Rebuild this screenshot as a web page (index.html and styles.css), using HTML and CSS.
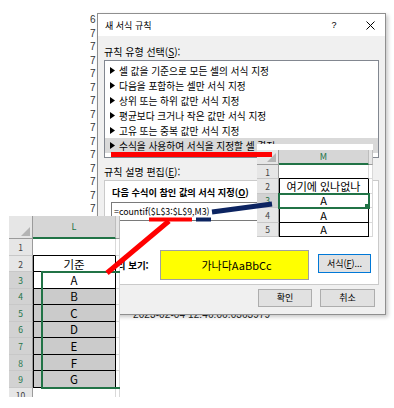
FILE: index.html
```html
<!DOCTYPE html>
<html lang="ko">
<head>
<meta charset="utf-8">
<title>새 서식 규칙</title>
<link rel="stylesheet" href="styles.css">
</head>
<body>
<div class="canvas">
  <div class="bg-log">
    <div>6</div><div>7</div><div>7</div><div>7</div><div>7</div><div>7</div><div>7</div><div>7</div><div>7</div><div>7</div><div>7</div><div>7</div><div>7</div><div>7</div><div>7</div>
  </div>
  <div class="bg-stamp">2023-02-04 12:46:06.0363979</div>

  <div class="dialog">
    <div class="titlebar">
      <span class="title">새 서식 규칙</span>
      <span class="tb-q">?</span>
      <span class="tb-x"><svg width="9" height="9" viewBox="0 0 9 9"><path d="M0.5 0.5L8.5 8.5M8.5 0.5L0.5 8.5" stroke="#000" stroke-width="1" fill="none"/></svg></span>
    </div>
    <div class="dlg-body">
      <div class="label">규칙 유형 선택(<u>S</u>):</div>
      <ul class="rule-list">
        <li><svg class="tri" width="5" height="7" viewBox="0 0 5 7"><path d="M0 0L5 3.5L0 7Z"/></svg>셀 값을 기준으로 모든 셀의 서식 지정</li>
        <li><svg class="tri" width="5" height="7" viewBox="0 0 5 7"><path d="M0 0L5 3.5L0 7Z"/></svg>다음을 포함하는 셀만 서식 지정</li>
        <li><svg class="tri" width="5" height="7" viewBox="0 0 5 7"><path d="M0 0L5 3.5L0 7Z"/></svg>상위 또는 하위 값만 서식 지정</li>
        <li><svg class="tri" width="5" height="7" viewBox="0 0 5 7"><path d="M0 0L5 3.5L0 7Z"/></svg>평균보다 크거나 작은 값만 서식 지정</li>
        <li><svg class="tri" width="5" height="7" viewBox="0 0 5 7"><path d="M0 0L5 3.5L0 7Z"/></svg>고유 또는 중복 값만 서식 지정</li>
        <li class="sel"><svg class="tri" width="5" height="7" viewBox="0 0 5 7"><path d="M0 0L5 3.5L0 7Z"/></svg>수식을 사용하여 서식을 지정할 셀 결정</li>
      </ul>
      <div class="label label2">규칙 설명 편집(<u>E</u>):</div>
      <div class="panel">
        <div class="panel-head">다음 수식이 참인 값의 서식 지정(<u>O</u>)</div>
        <div class="formula">=countif($L$3:$L$9,M3)</div>
        <div class="preview-row">
          <span class="preview-label">미리 보기:</span>
          <div class="preview-box">가나다AaBbCc</div>
          <button class="btn fmt">서식(<u>F</u>)...</button>
        </div>
      </div>
      <div class="footer">
        <button class="btn ok">확인</button>
        <button class="btn cancel">취소</button>
      </div>
    </div>
  </div>

  <div class="sheet sheet-m">
    <div class="c corner"><span class="corner-tri"></span></div>
    <div class="c ch act">M</div>
    <div class="c ch"></div>

    <div class="c rh">1</div>
    <div class="c top-bk"></div>
    <div class="c"></div>

    <div class="c rh">2</div>
    <div class="c bk">여기에 있나없나</div>
    <div class="c"></div>

    <div class="c rh act">3</div>
    <div class="c bk cur">A</div>
    <div class="c"></div>

    <div class="c rh">4</div>
    <div class="c bk">A</div>
    <div class="c"></div>

    <div class="c rh">5</div>
    <div class="c bk">A</div>
    <div class="c"></div>
  </div>

  <div class="sheet sheet-l">
    <div class="c corner"><span class="corner-tri"></span></div>
    <div class="c ch act">L</div>
    <div class="c ch"></div>

    <div class="c rh">1</div>
    <div class="c top-bk"></div>
    <div class="c"></div>

    <div class="c rh">2</div>
    <div class="c bk">기준</div>
    <div class="c"></div>

    <div class="c rh act">3</div>
    <div class="c bk">A</div>
    <div class="c"></div>

    <div class="c rh act">4</div>
    <div class="c bk fill">B</div>
    <div class="c"></div>

    <div class="c rh act">5</div>
    <div class="c bk fill">C</div>
    <div class="c"></div>

    <div class="c rh act">6</div>
    <div class="c bk fill">D</div>
    <div class="c"></div>

    <div class="c rh act">7</div>
    <div class="c bk fill">E</div>
    <div class="c"></div>

    <div class="c rh act">8</div>
    <div class="c bk fill">F</div>
    <div class="c"></div>

    <div class="c rh act">9</div>
    <div class="c bk fill">G</div>
    <div class="c"></div>

    <div class="c rh r10">10</div>
    <div class="c"></div>
    <div class="c"></div>

    <div class="sel-range"></div>
  </div>

  <svg class="annot" width="394" height="408" viewBox="0 0 394 408">
    <line x1="111" y1="154.5" x2="272" y2="154.5" stroke="#ff0000" stroke-width="5"/>
    <line x1="149" y1="219.5" x2="192" y2="219.5" stroke="#ff0000" stroke-width="4"/>
    <line x1="169" y1="221" x2="107" y2="273" stroke="#ff0000" stroke-width="5"/>
    <line x1="196" y1="219.5" x2="211" y2="219.5" stroke="#0c2461" stroke-width="4"/>
    <line x1="212" y1="212" x2="272" y2="204" stroke="#0c2461" stroke-width="5"/>
  </svg>
</div>
</body>
</html>
```

FILE: styles.css
```css
* { box-sizing: border-box; }

body {
  margin: 0;
  background: #fff;
}

.canvas {
  position: relative;
  width: 394px;
  height: 408px;
  overflow: hidden;
  background: #fff;
  font-family: "Noto Sans CJK KR", sans-serif;
  color: #000;
}

/* background document peeking behind dialog */
.bg-log {
  position: absolute;
  left: 90px;
  top: 13px;
  width: 8px;
  overflow: hidden;
  font-family: "Liberation Sans", sans-serif;
  font-size: 10px;
  line-height: 13.5px;
  color: #333;
}

.bg-stamp {
  position: absolute;
  left: 133px;
  top: 308px;
  font-family: "Liberation Sans", sans-serif;
  font-size: 10px;
  line-height: 14px;
  color: #222;
  letter-spacing: 0.1px;
}

/* dialog window */
.dialog {
  position: absolute;
  left: 97px;
  top: 13px;
  width: 289px;
  height: 302px;
  border: 1px solid #8f8f8f;
  background: #f0f0f0;
  box-shadow: 2px 2px 4px rgba(0, 0, 0, 0.22);
  display: flex;
  flex-direction: column;
}

.titlebar {
  height: 22px;
  background: #fff;
  display: flex;
  align-items: center;
  padding-left: 7px;
  font-size: 9px;
}

.title { white-space: nowrap; }

.tb-q {
  margin-left: auto;
  width: 12px;
  text-align: center;
  margin-right: 24px;
  font-family: "Liberation Sans", sans-serif;
  font-size: 9px;
}

.tb-x {
  width: 12px;
  margin-right: 9px;
  display: flex;
  justify-content: center;
}

.dlg-body {
  flex: 1;
  padding: 0 6px;
  display: flex;
  flex-direction: column;
}

.label {
  font-size: 10px;
  line-height: 12px;
  padding-top: 10px;
  margin-bottom: 2px;
  white-space: nowrap;
}

.label2 { padding-top: 8px; }

.rule-list {
  list-style: none;
  margin: 0;
  padding: 2px 0;
  height: 98px;
  border: 1px solid #828790;
  background: #fff;
}

.rule-list li {
  height: 15px;
  display: flex;
  align-items: center;
  padding-left: 5px;
  font-size: 9.7px;
  white-space: nowrap;
}

.rule-list li.sel { background: #d9d9d9; }

.tri {
  flex: none;
  margin-right: 4px;
  fill: #000;
}

.panel {
  height: 105px;
  border: 1px solid #cacaca;
  background: #fff;
  padding: 5px 6px 0 7px;
}

.panel-head {
  font-size: 9.2px;
  line-height: 12px;
  font-weight: bold;
  white-space: nowrap;
}

.formula {
  margin-top: 4px;
  margin-left: -1px;
  width: 262px;
  height: 19px;
  border: 1px solid #7a7a7a;
  background: #fff;
  padding-left: 2px;
  font-size: 8.8px;
  line-height: 17px;
  white-space: nowrap;
}

.preview-row {
  display: flex;
  align-items: flex-start;
  margin-top: 29px;
}

.preview-label {
  flex: 0 0 52px;
  margin-left: -4px;
  font-size: 9.5px;
  line-height: 30px;
  font-weight: bold;
  white-space: nowrap;
}

.preview-box {
  width: 149px;
  height: 30px;
  border: 1px solid #a0a0a0;
  background: #ffff00;
  display: flex;
  align-items: center;
  justify-content: center;
  font-size: 11px;
  white-space: nowrap;
  padding-left: 4px;
}

.btn {
  font-family: "Noto Sans CJK KR", sans-serif;
  font-size: 9px;
  background: #e1e1e1;
  border: 1px solid #adadad;
  padding: 0;
  height: 18px;
  color: #000;
  line-height: 16px;
}

.fmt {
  margin-left: 9px;
  margin-top: 4px;
  width: 53px;
  height: 19px;
  border: 1px solid #0078d7;
  background: #e1e1e1;
}

.footer {
  display: flex;
  justify-content: flex-end;
  gap: 8px;
  padding-top: 4px;
  padding-right: 4px;
}

.ok { width: 54px; }
.cancel { width: 55px; }

/* spreadsheet cut-outs */
.sheet {
  position: absolute;
  background: #fff;
  display: grid;
  overflow: hidden;
  font-size: 11px;
}

.c {
  border-right: 1px solid #d9d9d9;
  border-bottom: 1px solid #d9d9d9;
  display: flex;
  align-items: center;
  justify-content: center;
  white-space: nowrap;
  overflow: hidden;
}

.corner {
  background: #e6e6e6;
  border-right-color: #9b9b9b;
  border-bottom-color: #9b9b9b;
  position: relative;
}

.corner-tri {
  position: absolute;
  right: 2px;
  bottom: 2px;
  width: 0;
  height: 0;
  border-left: 9px solid transparent;
  border-bottom: 9px solid #b4b4b4;
}

.ch {
  background: #e6e6e6;
  border-right-color: #bdbdbd;
  border-bottom-color: #9b9b9b;
  color: #444;
  font-size: 9px;
}

.ch.act {
  background: #d6d6d6;
  color: #217346;
  border-bottom: 2px solid #217346;
}

.rh {
  background: #e6e6e6;
  border-right-color: #9b9b9b;
  border-bottom-color: #c8c8c8;
  color: #444;
  font-size: 8.5px;
}

.rh.act {
  background: #d2d2d2;
  color: #217346;
}

.r10 { align-items: flex-start; padding-top: 1px; }

.top-bk { border-bottom-color: #000; }

.bk {
  border-right-color: #000;
  border-bottom-color: #000;
  box-shadow: inset 1px 0 0 #000;
}

.fill { background: #cbcbcb; }

.cur {
  position: relative;
  outline: 2px solid #217346;
  outline-offset: -1px;
  z-index: 1;
}

.cur::after {
  content: "";
  position: absolute;
  right: -3px;
  bottom: -3px;
  width: 5px;
  height: 5px;
  background: #217346;
  border: 1px solid #fff;
}

.sheet-m {
  left: 257px;
  top: 144px;
  width: 116px;
  height: 94px;
  padding-top: 6px;
  grid-template-columns: 22px 90px 4px;
  grid-template-rows: 15px repeat(5, 14.4px);
}

.sheet-l {
  left: 9px;
  top: 216px;
  width: 111px;
  height: 181px;
  grid-template-columns: 24px 83px 4px;
  grid-template-rows: 23px 17px 16px repeat(7, 16.571px) 20px;
  font-size: 11.5px;
}

.sheet-l .ch { align-items: flex-end; padding-bottom: 4px; }

.sel-range {
  position: absolute;
  left: 32px;
  top: 55px;
  width: 85px;
  height: 118px;
  border: 2px solid #217346;
}

.sel-range::after {
  content: "";
  position: absolute;
  right: -4px;
  bottom: -4px;
  width: 6px;
  height: 6px;
  background: #217346;
  border: 1px solid #fff;
}

.annot {
  position: absolute;
  left: 0;
  top: 0;
  pointer-events: none;
}
```
